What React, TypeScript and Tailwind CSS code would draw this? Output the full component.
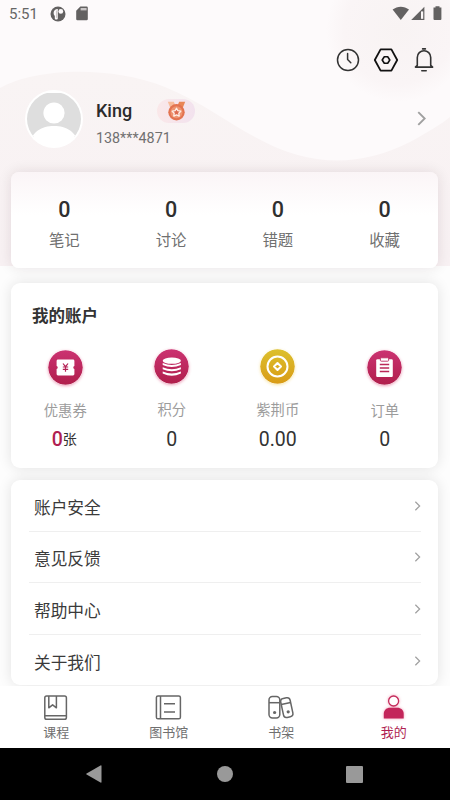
import type { ReactNode } from 'react';
import { clsx } from 'clsx';

const stats = [
  { label: '笔记', value: '0' },
  { label: '讨论', value: '0' },
  { label: '错题', value: '0' },
  { label: '收藏', value: '0' },
];

const menu = ['账户安全', '意见反馈', '帮助中心', '关于我们'];

const StatusBar = () => (
  <div className="flex h-[27px] items-center justify-between pl-[9px] pr-[7px] text-[#666]">
    <div className="flex items-center">
      <span className="pt-px text-[15px] leading-none">5:51</span>
      <svg className="ml-3 h-4 w-4" viewBox="0 0 16 16">
        <circle cx="8" cy="8" r="7.5" fill="#636161" />
        <path d="M7.8 3v9.4a1.1 1.1 0 0 1-1.1 1.1H5.9a1.1 1.1 0 0 1-1.1-1.1V10A4 4 0 0 1 3.6 6.8 3.9 3.9 0 0 1 7.8 3z" fill="#fdfafb" />
        <path d="M6.6 4.6v7.2" stroke="#bbb6b7" strokeWidth=".8" />
        <circle cx="10.8" cy="5.4" r="2.4" fill="#fdfafb" />
      </svg>
      <svg className="ml-2.5 h-[15px] w-3" viewBox="0 0 12 15">
        <path d="M4.3.5H10.6A1.2 1.2 0 0 1 11.8 1.7V13A1.2 1.2 0 0 1 10.6 14.2H1.4A1.2 1.2 0 0 1 .2 13V4.8z" fill="#636161" />
        <path d="M4.6 2h6v2.4h-6z" fill="#c9c5c6" />
      </svg>
    </div>
    <svg className="h-[15px] w-[51px]" viewBox="0 0 51 15" fill="#636161">
      <path d="M.6 3.6C5.4-.3 12.2-.3 17 3.6L8.8 14z" />
      <path d="M32.4.8V14H19.2z" />
      <path d="M29 5.4h2.2v7.4H29z" fill="#fbf7f8" />
      <path d="M41.5 1.6h2V.3h4v1.3h1.9v11.5a1 1 0 0 1-1 1h-5.9a1 1 0 0 1-1-1z" />
    </svg>
  </div>
);

const Backdrop = () => (
  <svg className="absolute left-0 top-0 h-[266px] w-[450px]" viewBox="0 0 450 266">
    <defs>
      <linearGradient id="wave" x1="0" y1="0" x2="0" y2="1">
        <stop offset="0" stopColor="#f9f4f4" />
        <stop offset="1" stopColor="#f8f1f3" />
      </linearGradient>
      <radialGradient id="sun">
        <stop offset="0" stopColor="#f8f3f3" />
        <stop offset=".75" stopColor="#faf5f6" />
        <stop offset="1" stopColor="#fdfafb" />
      </radialGradient>
    </defs>
    <path d="M0 0h450v266H0z" fill="#fdfafb" />
    <circle cx="398" cy="30" r="72" fill="url(#sun)" />
    <path d="M0 88C35 68 110 65 165 87C200 101 230 124 255 137C310 168 360 167 410 142C428 132 440 125 450 117V266H0z" fill="url(#wave)" />
  </svg>
);

const TopIcons = () => (
  <div className="flex h-[66px] items-center justify-end pr-4">
    <svg className="h-6 w-6" viewBox="0 0 24 24" fill="none" stroke="#333" strokeWidth="1.5" strokeLinecap="round">
      <circle cx="12" cy="12" r="10.5" />
      <path d="M11.6 5.5v6l3.2 3.2" />
    </svg>
    <svg className="ml-[13px] h-6 w-[26px]" viewBox="0 0 26 24" fill="none" stroke="#111" strokeWidth="1.8" strokeLinejoin="round">
      <path d="M7.6 1.4h10.8L24.2 12l-5.8 10.6H7.6L1.8 12z" />
      <path d="M11.3 8.7h3.4l2.1 3.3-2.1 3.3h-3.4L9.2 12z" strokeWidth="1.6" />
    </svg>
    <svg className="ml-[15px] h-6 w-5" viewBox="0 0 20 24" fill="none" stroke="#333" strokeWidth="1.6" strokeLinecap="round" strokeLinejoin="round">
      <path d="M8.6.9h2.8M7.8 22.8h4.4" />
      <path d="M3.3 17.3V9.4a6.7 6.7 0 0 1 13.4 0v7.9l1.9 1.8H1.4z" />
    </svg>
  </div>
);

const Chevron = ({ className, width = 1.7 }: { className?: string; width?: number }) => (
  <svg className={className} viewBox="0 0 8 14" fill="none" stroke="#a0a0a0" strokeWidth={width}>
    <path d="M1 1l6 6-6 6" />
  </svg>
);

const Badge = () => (
  <div className="ml-[25px] flex h-6 w-[38px] items-center justify-center rounded-full bg-linear-to-r from-[#fae8e9] to-[#f2e2ee]">
    <svg className="h-5 w-[19px]" viewBox="0 0 19 20">
      <path d="M.8.8h6l2 4.4-5 3z" fill="#f7bd9c" />
      <path d="M18.2.8h-6l-2 4.4 5 3z" fill="#e98657" />
      <circle cx="9.5" cy="11.2" r="8.2" fill="#e37350" />
      <circle cx="9.5" cy="11.2" r="6" fill="#ee9470" />
      <path d="M9.5 7.2l1.4 2.5 2.9.5-2 2 .4 2.9-2.7-1.2-2.7 1.2.4-2.9-2-2 2.9-.5z" fill="#de6c50" stroke="#fff0e8" strokeWidth="1.3" strokeLinejoin="round" />
    </svg>
  </div>
);

const Profile = () => (
  <div className="flex h-[79px] items-start pl-6 pr-6">
    <svg className="h-[60px] w-[60px]" viewBox="0 0 60 60">
      <defs>
        <clipPath id="face">
          <circle cx="30" cy="30" r="27" />
        </clipPath>
      </defs>
      <circle cx="30" cy="30" r="29" fill="#fff" />
      <g clipPath="url(#face)">
        <path d="M0 4h60v44H0z" fill="#dedede" />
        <circle cx="30" cy="24" r="10.6" fill="#fff" />
        <path d="M5 60C6 43 17 37 30 37S54 43 55 60z" fill="#fff" />
      </g>
    </svg>
    <div className="ml-3 pt-2.5">
      <div className="flex h-6 items-center">
        <span className="text-[18px] font-medium leading-6 text-[#2b2b2b]">King</span>
        <Badge />
      </div>
      <p className="mt-[5px] text-[14.3px] leading-5 text-[#707070]">138***4871</p>
    </div>
    <Chevron className="ml-auto mt-[22px] h-[15px] w-[9px]" width={1.8} />
  </div>
);

const RoundIcon = ({ id, gold, children }: { id: string; gold?: boolean; children: ReactNode }) => (
  <svg className={clsx('h-[35px] w-[35px] rounded-full', gold ? 'shadow-[0_1px_3px_#f0c84070]' : 'shadow-[0_1px_3px_#d82e6470]')} viewBox="0 0 35 35">
    <defs>
      <linearGradient id={id} x1="0" y1="0" x2="0" y2="1">
        <stop offset="0" stopColor={gold ? '#dcc02e' : '#cb3271'} />
        <stop offset="1" stopColor={gold ? '#d99b16' : '#b01f4c'} />
      </linearGradient>
    </defs>
    <circle cx="17.5" cy="17.5" r="17.3" fill={`url(#${id})`} />
    {children}
  </svg>
);

const accounts = [
  {
    label: '优惠券',
    value: '0',
    unit: '张',
    offset: 'pt-[18px]',
    icon: (
      <RoundIcon id="coupon">
        <path d="M10 9.5h15a1.4 1.4 0 0 1 1.4 1.4v5a1.7 1.7 0 0 0 0 3.2v5a1.4 1.4 0 0 1-1.4 1.4H10a1.4 1.4 0 0 1-1.4-1.4v-5a1.7 1.7 0 0 0 0-3.2v-5A1.4 1.4 0 0 1 10 9.5z" fill="#fff" />
        <path d="M15 13.5l2.5 3.2 2.5-3.2M17.5 16.7v5M14.8 17h5.4M14.8 19.3h5.4" fill="none" stroke="#b52456" strokeWidth="1.2" />
      </RoundIcon>
    ),
  },
  {
    label: '积分',
    value: '0',
    offset: 'pt-[17px]',
    icon: (
      <RoundIcon id="points">
        <ellipse cx="17.8" cy="11.7" rx="9.1" ry="3.1" fill="#fff" />
        <path d="M8.7 14q9.1 4 18.2 0v2q-9.1 4-18.2 0zM8.7 18.2q9.1 4 18.2 0v2q-9.1 4-18.2 0zM8.7 22.4q9.1 4 18.2 0v2.2q-9.1 4.4-18.2 0z" fill="#fff" />
      </RoundIcon>
    ),
  },
  {
    label: '紫荆币',
    value: '0.00',
    offset: 'pt-[17px] -ml-px',
    icon: (
      <RoundIcon id="coin" gold>
        <g fill="none" stroke="#fff" strokeWidth="2">
          <circle cx="17.5" cy="17.5" r="10" />
          <path d="M17.5 14l3.5 3.5-3.5 3.5-3.5-3.5z" strokeLinejoin="round" />
        </g>
      </RoundIcon>
    ),
  },
  {
    label: '订单',
    value: '0',
    offset: 'pt-[18px]',
    icon: (
      <RoundIcon id="order">
        <rect x="9.2" y="9.2" width="16.6" height="17.8" rx="1.2" fill="#fff" />
        <rect x="13.4" y="7.8" width="8.2" height="3.4" rx=".8" fill="#fff" stroke="#c02b63" strokeWidth=".9" />
        <path d="M12.8 14.5h9.4M12.8 18h9.4M12.8 21.5h9.4" stroke="#bb2859" strokeWidth="1.3" />
      </RoundIcon>
    ),
  },
];

const tabs = [
  {
    label: '课程',
    icon: (
      <svg className="h-[25px] w-[27px]" viewBox="0 0 27 25" fill="none" stroke="#666" strokeWidth="1.5" strokeLinejoin="round">
        <rect x="1.8" y="1" width="21.6" height="23.2" rx="1.8" />
        <path d="M1.8 20.8h21.6M5.8 1v11.8l3.8-3 3.8 3V1" />
      </svg>
    ),
  },
  {
    label: '图书馆',
    icon: (
      <svg className="h-[25px] w-[27px]" viewBox="0 0 27 25" fill="none" stroke="#666" strokeWidth="1.5" strokeLinejoin="round">
        <rect x="1.4" y="1" width="24" height="22.8" rx="1.6" />
        <path d="M5.5 1v22.8M9 8.8h11M9 17h11" />
      </svg>
    ),
  },
  {
    label: '书架',
    icon: (
      <svg className="h-[25px] w-[27px]" viewBox="0 0 27 25" fill="none" stroke="#666" strokeWidth="1.5">
        <rect x="1" y="1.6" width="10.8" height="21.4" rx="3.4" />
        <path d="M1 7.7h10.8" />
        <g transform="rotate(-12 18.8 12.6)">
          <rect x="14" y="2.9" width="9.6" height="19.4" rx="3.2" />
          <path d="M14 8.5h9.6" />
        </g>
        <circle cx="6.6" cy="17.5" r="1.6" fill="#666" stroke="none" />
        <circle cx="20.2" cy="16.8" r="1.6" fill="#666" stroke="none" />
      </svg>
    ),
  },
  {
    label: '我的',
    active: true,
    icon: (
      <svg className="h-[25px] w-[27px] drop-shadow-[0_0_1.5px_#e8407080]" viewBox="0 0 27 25">
        <circle cx="13.6" cy="6" r="5" fill="#fff" stroke="#c42c5c" strokeWidth="1.3" />
        <path d="M3.8 23.6v-4.8C3.8 14.9 7 12.8 9.8 12.8h7.7c3.2 0 6.2 2.2 6.2 6v4.8z" fill="#c3265a" />
      </svg>
    ),
  },
];

const App = () => {
  return (
    <div className="relative flex h-[800px] w-[450px] flex-col overflow-hidden bg-[#fdfdfd] font-[Roboto,'Noto_Sans_CJK_SC',sans-serif]">
      <Backdrop />
      <div className="relative flex h-[686px] flex-col overflow-hidden">
        <StatusBar />
        <TopIcons />
        <div className="-mt-[4px]">
          <Profile />
        </div>

        {/* Study counters */}
        <div className="ml-[11px] mt-1 grid h-24 w-[427px] shrink-0 grid-cols-4 rounded-[8px] bg-linear-to-b from-[#fbf5f7] to-white to-45% pt-[26px] shadow-[0_0_14px_rgba(50,20,30,0.11)]">
          {stats.map((item) => (
            <div key={item.label} className="flex flex-col items-center">
              <span className="text-[21.5px] font-medium leading-6 text-[#2f2f2f]">{item.value}</span>
              <span className="mt-2 text-[15.4px] leading-[22px] text-[#707070]">{item.label}</span>
            </div>
          ))}
        </div>

        {/* Account */}
        <div className="ml-[11px] mt-[15px] h-[185px] w-[427px] shrink-0 rounded-[9px] bg-white pt-[22px] shadow-[0_0_14px_rgba(0,0,0,0.11)]">
          <h2 className="pl-[21px] text-[16.5px] font-bold leading-6 text-[#333]">我的账户</h2>
          <div className="mt-[3px] grid grid-cols-4 pl-px">
            {accounts.map((item) => (
              <div key={item.label} className={clsx('flex h-[120px] flex-col items-center', item.offset)}>
                {item.icon}
                <span className="mt-4 text-[14.3px] leading-5 text-[#9c9c9c]">{item.label}</span>
                <span className={clsx('mt-auto flex items-center text-[19.5px] leading-6', item.unit ? '-ml-0.5 font-medium text-[#b01f52]' : 'text-[#333]')}>
                  {item.value}
                  {item.unit && <span className="-mt-0.5 text-[14px] font-normal text-[#333]">{item.unit}</span>}
                </span>
              </div>
            ))}
          </div>
        </div>

        {/* Menu */}
        <div className="ml-[11px] mt-3 h-[205px] w-[427px] shrink-0 rounded-[9px] bg-white pl-[18px] pr-[17px] shadow-[0_0_14px_rgba(0,0,0,0.11)]">
          {menu.map((label) => (
            <div key={label} className="flex h-[51.6px] items-center justify-between border-b border-[#efefef] pl-[5px] last:border-0">
              <span className="pt-[7px] text-[16.7px] leading-6 text-[#3a3a3a]">{label}</span>
              <Chevron className="mt-px h-[10px] w-[7px]" />
            </div>
          ))}
        </div>
      </div>

      <div className="relative grid h-[62px] shrink-0 grid-cols-4 bg-white">
        {tabs.map((tab) => (
          <div key={tab.label} className="flex flex-col items-center pt-[9px]">
            {tab.icon}
            <span className={clsx('mt-[3px] text-[13px] leading-5', tab.active ? 'text-[#b01f52]' : 'text-[#707070]')}>{tab.label}</span>
          </div>
        ))}
      </div>

      <div className="relative flex h-[52px] shrink-0 items-center justify-between bg-black pl-[86px] pr-[87px]">
        <svg className="h-[18px] w-4" viewBox="0 0 16 18" fill="#999">
          <path d="M15.5 1v16a.7.7 0 0 1-1 .6L.6 9.6a.7.7 0 0 1 0-1.2L14.5.4a.7.7 0 0 1 1 .6z" />
        </svg>
        <div className="ml-[2px] h-4 w-4 rounded-full bg-[#999]" />
        <div className="h-[17px] w-[17px] rounded-[1px] bg-[#999]" />
      </div>
    </div>
  );
};

export default App;
